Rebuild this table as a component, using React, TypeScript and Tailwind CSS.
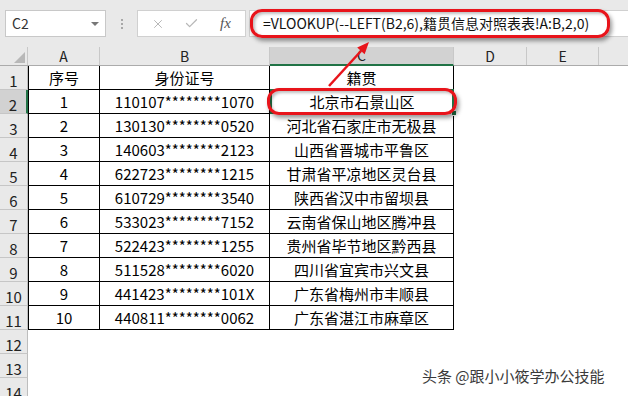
import { X, Check } from 'lucide-react';

const rows: string[][] = [
  ['序号', '身份证号', '籍贯'],
  ['1', '110107********1070', '北京市石景山区'],
  ['2', '130130********0520', '河北省石家庄市无极县'],
  ['3', '140603********2123', '山西省晋城市平鲁区'],
  ['4', '622723********1215', '甘肃省平凉地区灵台县'],
  ['5', '610729********3540', '陕西省汉中市留坝县'],
  ['6', '533023********7152', '云南省保山地区腾冲县'],
  ['7', '522423********1255', '贵州省毕节地区黔西县'],
  ['8', '511528********6020', '四川省宜宾市兴文县'],
  ['9', '441423********101X', '广东省梅州市丰顺县'],
  ['10', '440811********0062', '广东省湛江市麻章区'],
];

const FormulaBar = () => (
  <div className="h-[47px] bg-[#e9e9e9] flex items-start pt-[10px]">
    <div className="ml-[5px] w-[101px] h-[27px] bg-white border border-[#c8c8c8] flex items-center justify-between pl-[6px] pr-[6px]">
      <span className="text-[14px] text-[#333]">C2</span>
      <span className="w-0 h-0 border-l-[4px] border-r-[4px] border-t-[4px] border-l-transparent border-r-transparent border-t-[#777]" />
    </div>
    <div className="w-[31px] h-[27px] flex flex-col items-center justify-center gap-[2px]">
      <span className="w-[2px] h-[2px] bg-[#a8a8a8]" />
      <span className="w-[2px] h-[2px] bg-[#a8a8a8]" />
      <span className="w-[2px] h-[2px] bg-[#a8a8a8]" />
    </div>
    <div className="w-[109px] h-[27px] bg-white border border-[#d0d0d0] flex items-center pl-[13px]">
      <X className="w-[14px] h-[14px] text-[#b3b3b3]" strokeWidth={1.6} />
      <Check className="w-[15px] h-[15px] text-[#b8b8b8] ml-[19px]" strokeWidth={2} />
      <span className="ml-[21px] text-[15px] italic text-[#555] font-['Liberation_Serif',serif]">fx</span>
    </div>
    <div className="ml-[3px] flex-1 h-[27px] bg-white border-t border-l border-b border-[#d0d0d0] flex items-center pl-[13px]">
      <span className="text-[14px] text-[#111] whitespace-nowrap">=VLOOKUP(--LEFT(B2,6),籍贯信息对照表表!A:B,2,0)</span>
    </div>
  </div>
);

const ColumnHeaders = () => (
  <div className="h-[19px] flex bg-[#e9e9e9] border-b border-[#ababab] text-[14px] text-[#222]">
    <div className="w-[28px] border-r border-[#c8c8c8] flex items-end justify-end pr-[2px] pb-[2px]">
      <svg width="11" height="11" viewBox="0 0 11 11">
        <polygon points="11,0 11,11 0,11" fill="#b8b8b8" />
      </svg>
    </div>
    <div className="w-[72px] border-r border-[#c8c8c8] flex items-center justify-center">A</div>
    <div className="w-[170px] border-r border-[#c8c8c8] flex items-center justify-center">B</div>
    <div className="w-[184px] bg-[#d2d2d2] border-r border-[#c8c8c8] border-b-2 border-b-[#217346] -mb-[1px] flex items-center justify-center">C</div>
    <div className="w-[73px] border-r border-[#c8c8c8] flex items-center justify-center">D</div>
    <div className="w-[72px] border-r border-[#c8c8c8] flex items-center justify-center">E</div>
    <div className="flex-1" />
  </div>
);

const RowHeader = ({ n, active }: { n: number; active?: boolean }) => (
  <div
    className={`w-[28px] shrink-0 flex items-end justify-center border-b border-[#c6c6c6] text-[15px] leading-[17px] text-[#222] ${
      active ? 'bg-[#d2d2d2] border-r-2 border-r-[#217346]' : 'bg-[#e9e9e9] border-r border-r-[#bdbdbd]'
    }`}
  >
    {n}
  </div>
);

export default function App() {
  return (
    <div className="w-[628px] h-[396px] overflow-hidden relative bg-white font-['Noto_Sans_CJK_SC',sans-serif]">
      <FormulaBar />
      <ColumnHeaders />
      {rows.map((r, i) => (
        <div key={i} className="h-[24px] flex">
          <RowHeader n={i + 1} active={i === 1} />
          <div className="w-[72px] border-l border-r border-b border-black flex items-center justify-center text-[15px] text-black pt-[1px]">{r[0]}</div>
          <div className="w-[170px] border-r border-b border-black flex items-center justify-center text-[15px] text-black pt-[1px]">{r[1]}</div>
          <div className={`w-[184px] flex items-center justify-center text-[15px] text-black pt-[1px] ${i === 1 ? 'border-2 border-[#217346] -mt-[1px]' : 'border-r border-b border-black'}`}>{r[2]}</div>
          <div className="flex-1" />
        </div>
      ))}
      {[12, 13, 14].map((n) => (
        <div key={n} className="h-[24px] flex">
          <RowHeader n={n} />
          <div className="flex-1" />
        </div>
      ))}

      {/* fill handle */}
      <span className="absolute left-[451px] top-[110px] w-[6px] h-[6px] bg-[#217346] border border-white" />

      {/* red annotations */}
      <div className="absolute left-[250px] top-[9px] w-[360px] h-[29px] rounded-[12px] border-[3px] border-[#e8141b] shadow-[2px_3px_4px_rgba(0,0,0,0.4),inset_2px_2px_3px_rgba(0,0,0,0.25)]" />
      <div className="absolute left-[267px] top-[88px] w-[190px] h-[27px] rounded-[12px] border-[3px] border-[#e8141b] shadow-[2px_3px_4px_rgba(0,0,0,0.4),inset_2px_2px_3px_rgba(0,0,0,0.25)]" />
      <svg className="absolute left-0 top-0" width="628" height="396" viewBox="0 0 628 396">
        <line x1="329" y1="86" x2="361" y2="51" stroke="#e8141b" strokeWidth="2.5" />
        <polygon points="369,42 364.6,54.3 357.2,47.5" fill="#e8141b" />
      </svg>

      {/* watermark */}
      <div className="absolute left-[422px] top-[365px] text-[15px] text-[#3a3a3a] whitespace-nowrap [text-shadow:1px_1px_0_#fff,-1px_-1px_0_#fff]">
        头条 @跟小小筱学办公技能
      </div>
    </div>
  );
}
